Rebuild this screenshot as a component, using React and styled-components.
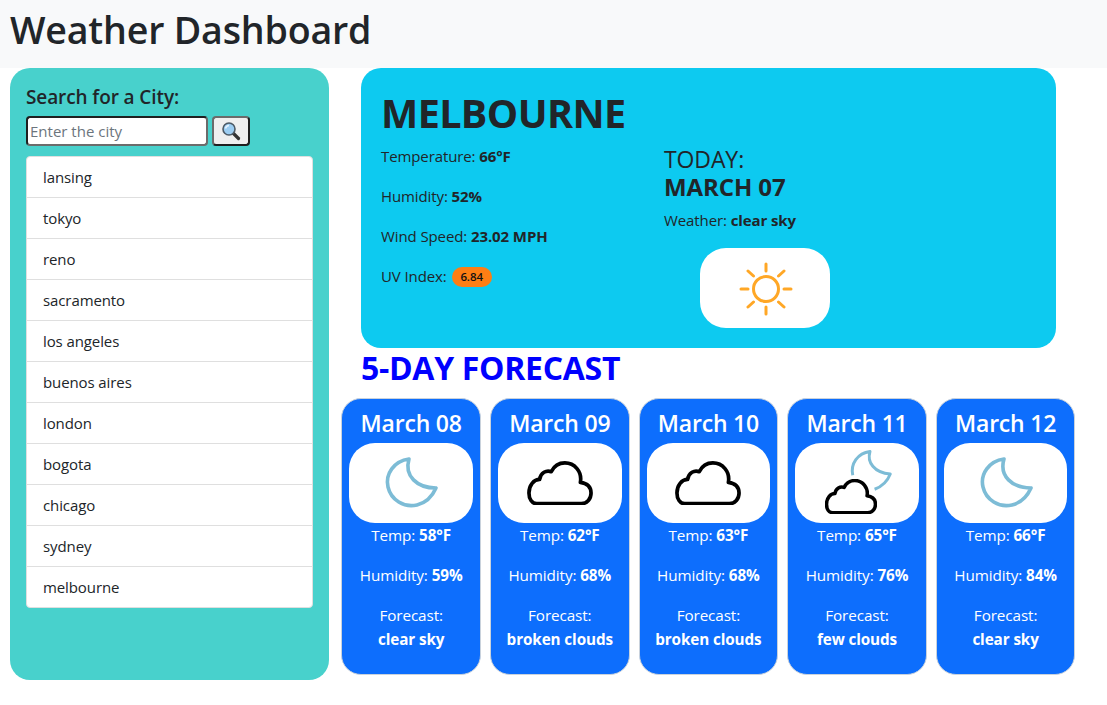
import styled, { createGlobalStyle } from "styled-components";

const GlobalStyle = createGlobalStyle`
  * {
    box-sizing: border-box;
  }
  body {
    margin: 0;
    background-color: #fff;
    color: #212529;
    font-family: "Open Sans", "Noto Sans", sans-serif;
    font-size: 15px;
    letter-spacing: -0.1px;
  }
`;

const Header = styled.header`
  height: 68px;
  padding-left: 10px;
  background-color: #f8f9fa;
`;

const Title = styled.h1`
  margin: 0;
  font-size: 37.6px;
  font-weight: 600;
  line-height: 60px;
  letter-spacing: -0.2px;
`;

const Page = styled.main`
  display: flex;
  align-items: flex-start;
  padding-left: 10px;
`;

const Sidebar = styled.aside`
  width: 319px;
  height: 612px;
  padding: 17px 16px 0;
  background-color: #48d1cc;
  border-radius: 20px;
`;

const SearchLabel = styled.h2`
  margin: 0 0 7px;
  font-size: 19px;
  font-weight: 600;
  line-height: 24px;
`;

const SearchForm = styled.form`
  display: flex;
  gap: 4px;
  margin-bottom: 10px;
`;

const SearchInput = styled.input`
  width: 182px;
  height: 30px;
  padding: 1px 2px;
  font-family: inherit;
  font-size: 15px;
  background-color: #fff;
  border: 2px solid;
  border-color: #1f1f1f #6b6b6b #6b6b6b #1f1f1f;
  border-radius: 4px;
  outline: none;

  &::placeholder {
    color: #6c757d;
  }
`;

const SearchButton = styled.button`
  display: flex;
  align-items: center;
  justify-content: center;
  width: 38px;
  height: 30px;
  padding: 0;
  background-color: #efefef;
  border: 2px solid;
  border-color: #6b6b6b #1f1f1f #1f1f1f #6b6b6b;
  border-radius: 4px;
`;

const CityList = styled.ul`
  margin: 0;
  padding: 0;
  list-style: none;
  background-color: #fff;
  border: 1px solid #dfdfdf;
  border-radius: 4px;
`;

const CityItem = styled.li`
  height: 41px;
  padding: 0 16px;
  font-size: 15px;
  line-height: 40px;
  border-bottom: 1px solid #dfdfdf;

  &:last-child {
    height: 40px;
    border-bottom: none;
  }
`;

const Content = styled.section`
  width: 734px;
  margin-left: 12.4px;
`;

const CurrentPanel = styled.div`
  display: flex;
  width: 695px;
  height: 280px;
  margin-left: 19.6px;
  padding: 19px 20px 0;
  background-color: #0dcaf0;
  border-radius: 20px;
`;

const CurrentLeft = styled.div`
  width: 283px;
`;

const CityName = styled.h2`
  margin: 0 0 5px;
  font-size: 39.5px;
  font-weight: 700;
  line-height: 52px;
  letter-spacing: -0.6px;
`;

const Stat = styled.p`
  margin: 0 0 16px;
  font-size: 15px;
  line-height: 24px;
`;

const UvBadge = styled.span`
  display: inline-block;
  width: 40px;
  margin-left: 5px;
  font-size: 11.5px;
  font-weight: 600;
  line-height: 20px;
  text-align: center;
  color: #111;
  background-color: #fd7e14;
  border-radius: 10px;
  vertical-align: 1px;
`;

const CurrentRight = styled.div`
  width: 172px;
  padding-top: 58px;
`;

const TodayLabel = styled.div`
  font-size: 23px;
  line-height: 28px;
`;

const TodayDate = styled.div`
  margin-bottom: 7px;
  font-size: 24px;
  font-weight: 700;
  line-height: 28px;
`;

const TodayWeather = styled.p`
  margin: 0 0 16px;
  font-size: 15px;
  line-height: 24px;
`;

const IconBox = styled.div`
  display: flex;
  align-items: center;
  justify-content: center;
  position: relative;
  width: ${(props) => props.$width || "100%"};
  height: 80px;
  margin-left: ${(props) => props.$indent || "0"};
  background-color: #fff;
  border-radius: 26px;
`;

const ForecastTitle = styled.h2`
  margin: 0 0 10px 19.6px;
  font-size: 32px;
  font-weight: 700;
  line-height: 40px;
  letter-spacing: -0.3px;
  color: #00f;
`;

const ForecastGrid = styled.div`
  display: grid;
  grid-template-columns: repeat(5, 1fr);
  gap: 9px;
`;

const ForecastCard = styled.article`
  height: 277px;
  padding: 9px 7px 0;
  color: #fff;
  text-align: center;
  background-color: #0d6efd;
  border: 1px solid #c9d2dc;
  border-radius: 20px;
`;

const CardDate = styled.h3`
  margin: 0 0 5px;
  font-size: 23px;
  font-weight: 600;
  line-height: 30px;
  letter-spacing: -0.2px;
`;

const CardLine = styled.p`
  margin: 0 0 16px;
  font-size: 15.25px;
  line-height: 24px;
`;

const MiniMoon = styled.div`
  position: absolute;
  top: 6px;
  left: 52px;
`;

const MiniCloud = styled.div`
  position: absolute;
  top: 36px;
  left: 30px;
`;

const Sun = () => (
  <svg width="58" height="58" viewBox="-2 -2 58 58" fill="none" stroke="#ffa726" strokeWidth="3" strokeLinecap="round">
    <circle cx="28" cy="28" r="12.5" />
    <path d="M28 3v7M28 46v7M3 28h7M46 28h7M10 10l5.500 5M40.500 41l5.500 5M46 10l-5.500 5M15.500 41L10 46" />
  </svg>
);

const Moon = ({ size = 56, cut = false }) => (
  <svg width={size} height={size} viewBox="0 0 56 56" fill="none" stroke="#7dbcd6" strokeWidth="3.600" strokeLinejoin="round">
    {cut ? (
      <path d="M7 32C4 18 13 5 28 3C24 16 33 29 52.700 30.500C49 40 42 46 33.600 49" />
    ) : (
      <path d="M26 4C11 6 2 19 5 32C8 45 21 53 34 50C42 48 49 42 53 33C34 33 21 21 26 4Z" />
    )}
  </svg>
);

const Cloud = ({ size = 66, weight = 3.800 }) => (
  <svg width={size} height={(size * 46) / 68} viewBox="0 0 68 46" fill="none" stroke="#000" strokeWidth={weight} strokeLinejoin="round">
    <path d="M10 44H56C62 44 66 39 66 33C66 27 62 23 55 22C57 11 49 2 39 2C33 2 28 5 25 11C20 9 14 12 13 19C7 19 2 25 2 33C2 39 5 44 10 44Z" />
  </svg>
);

const SearchGlyph = () => (
  <svg width="20" height="20" viewBox="0 0 20 20">
    <path d="M11.500 11.500l6 6" stroke="#333" strokeWidth="3.200" strokeLinecap="round" />
    <circle cx="8" cy="8" r="6" fill="#9ccdf2" stroke="#4d5a66" strokeWidth="1.600" />
    <path d="M4.500 7.500a4 4 0 0 1 3.500-3" fill="none" stroke="#e4f3ff" strokeWidth="1.500" />
  </svg>
);

const CITIES = [
  "lansing",
  "tokyo",
  "reno",
  "sacramento",
  "los angeles",
  "buenos aires",
  "london",
  "bogota",
  "chicago",
  "sydney",
  "melbourne",
];

const FORECAST = [
  { date: "March 08", temp: "58°F", humidity: "59%", text: "clear sky", icon: "moon" },
  { date: "March 09", temp: "62°F", humidity: "68%", text: "broken clouds", icon: "cloud" },
  { date: "March 10", temp: "63°F", humidity: "68%", text: "broken clouds", icon: "cloud" },
  { date: "March 11", temp: "65°F", humidity: "76%", text: "few clouds", icon: "few" },
  { date: "March 12", temp: "66°F", humidity: "84%", text: "clear sky", icon: "moon" },
];

const renderIcon = (icon) => {
  if (icon === "moon") return <Moon />;
  if (icon === "cloud") return <Cloud />;
  return (
    <>
      <MiniMoon>
        <Moon size={46} cut />
      </MiniMoon>
      <MiniCloud>
        <Cloud size={52} weight={4.600} />
      </MiniCloud>
    </>
  );
};

const App = () => {
  return (
    <>
      <GlobalStyle />
      <Header>
        <Title>Weather Dashboard</Title>
      </Header>
      <Page>
        <Sidebar>
          <SearchLabel>Search for a City:</SearchLabel>
          <SearchForm onSubmit={(e) => e.preventDefault()}>
            <SearchInput type="text" placeholder="Enter the city" />
            <SearchButton type="submit" aria-label="Search">
              <SearchGlyph />
            </SearchButton>
          </SearchForm>
          <CityList>
            {CITIES.map((city) => (
              <CityItem key={city}>{city}</CityItem>
            ))}
          </CityList>
        </Sidebar>
        <Content>
          <CurrentPanel>
            <CurrentLeft>
              <CityName>MELBOURNE</CityName>
              <Stat>
                Temperature: <b>66°F</b>
              </Stat>
              <Stat>
                Humidity: <b>52%</b>
              </Stat>
              <Stat>
                Wind Speed: <b>23.02 MPH</b>
              </Stat>
              <Stat>
                UV Index:<UvBadge>6.84</UvBadge>
              </Stat>
            </CurrentLeft>
            <CurrentRight>
              <TodayLabel>TODAY:</TodayLabel>
              <TodayDate>MARCH 07</TodayDate>
              <TodayWeather>
                Weather: <b>clear sky</b>
              </TodayWeather>
              <IconBox $width="130px" $indent="36px">
                <Sun />
              </IconBox>
            </CurrentRight>
          </CurrentPanel>
          <ForecastTitle>5-DAY FORECAST</ForecastTitle>
          <ForecastGrid>
            {FORECAST.map((day) => (
              <ForecastCard key={day.date}>
                <CardDate>{day.date}</CardDate>
                <IconBox>{renderIcon(day.icon)}</IconBox>
                <CardLine>
                  Temp: <b>{day.temp}</b>
                </CardLine>
                <CardLine>
                  Humidity: <b>{day.humidity}</b>
                </CardLine>
                <CardLine>
                  Forecast:
                  <br />
                  <b>{day.text}</b>
                </CardLine>
              </ForecastCard>
            ))}
          </ForecastGrid>
        </Content>
      </Page>
    </>
  );
};

export default App;
